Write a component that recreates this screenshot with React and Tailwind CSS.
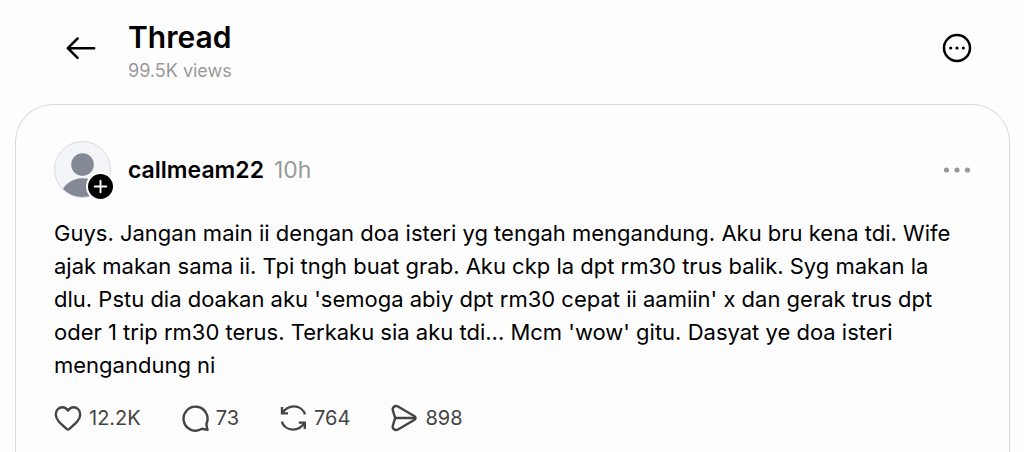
import React from 'react';

const stats = [
  { label: 'Like', count: '12.2K', Icon: HeartIcon },
  { label: 'Reply', count: '73', Icon: ReplyIcon },
  { label: 'Repost', count: '764', Icon: RepostIcon },
  { label: 'Share', count: '898', Icon: SendIcon },
];

const strokeProps = {
  viewBox: '0 0 28 28',
  fill: 'none',
  stroke: 'currentColor',
  strokeWidth: 2.4,
  strokeLinecap: 'round',
  strokeLinejoin: 'round',
  className: 'size-7 shrink-0',
  'aria-hidden': true,
};

function HeartIcon() {
  return (
    <svg {...strokeProps}>
      <path d="M14 6.500C12.700 4.500 10.800 3.200 8.500 3.200 4.700 3.200 1.800 6.300 1.800 10.400c0 5.200 4.300 9.100 11.100 14.700.7.6 1.500.6 2.200 0 6.800-5.600 11.100-9.500 11.100-14.700 0-4.100-2.900-7.200-6.700-7.200-2.300 0-4.200 1.300-5.500 3.300Z" />
    </svg>
  );
}

function ReplyIcon() {
  return (
    <svg {...strokeProps}>
      <path d="M25.300 20A12 12 0 1 0 21 24.800L26.500 25.900Z" />
    </svg>
  );
}

function RepostIcon() {
  return (
    <svg {...strokeProps} strokeLinejoin="miter" strokeLinecap="butt">
      <path d="M26 10.400C24.500 5.600 20 2.400 14.900 2.400 10 2.400 5.800 5 3 9.600" />
      <path d="M3 3V9.400H9" />
      <path d="M2.800 17.600C4.300 22.400 8.800 25.600 13.900 25.600 18.800 25.600 23 23 25.800 18.400" />
      <path d="M25.800 25V18.600H19.800" />
    </svg>
  );
}

function SendIcon() {
  return (
    <svg {...strokeProps}>
      <path d="M24.600 12.300 8 2.500C4.900 .9 1.900 3.300 2.900 6.700L4.700 12.400Q5.200 14 4.700 15.600L2.900 21.300C1.900 24.700 4.900 27.100 8 25.500L24.600 15.700C25.900 14.900 25.900 13.100 24.600 12.300Z" />
      <path d="M5 14H24.500" />
    </svg>
  );
}

function Header() {
  return (
    <header className="flex items-center pt-[19px] pb-[17px] pl-[66px] pr-[52px]">
      <button type="button" aria-label="Back" className="mr-8 -mt-2.5">
        <svg viewBox="0 0 30 24" fill="none" stroke="currentColor" strokeWidth="2.500" strokeLinecap="round" strokeLinejoin="round" className="h-6 w-[30px]">
          <path d="M28.200 12.200H1.800M11.600 2.500 1.800 12.200 11.600 21.900" />
        </svg>
      </button>
      <div className="flex-1">
        <h1 className="text-[30px] leading-9 font-semibold">Thread</h1>
        <p className="text-[18px] leading-8 text-[#999999]">99.5K views</p>
      </div>
      <button type="button" aria-label="More options" className="-mt-2.5">
        <svg viewBox="0 0 30 30" className="size-[30px]" aria-hidden="true">
          <circle cx="15" cy="15" r="13" fill="none" stroke="currentColor" strokeWidth="2.500" />
          <circle cx="8.700" cy="15" r="1.600" />
          <circle cx="15" cy="15" r="1.600" />
          <circle cx="21.300" cy="15" r="1.600" />
        </svg>
      </button>
    </header>
  );
}

function Avatar() {
  return (
    <button type="button" aria-label="Follow callmeam22" className="relative shrink-0">
      <span className="block size-[57px] overflow-hidden rounded-full border border-[#dcdddf] bg-[#f3f5f9]">
        <svg viewBox="0 0 56 56" className="size-full" aria-hidden="true">
          <circle cx="28" cy="23" r="11.500" fill="#838a95" />
          <ellipse cx="28" cy="56" rx="22" ry="19" fill="#838a95" />
        </svg>
      </span>
      <span className="absolute -right-1 -bottom-[3px] rounded-full border-2 border-[#fdfdfd] bg-black">
        <svg viewBox="0 0 26 26" stroke="#fff" strokeWidth="2" strokeLinecap="round" className="size-[25px]" aria-hidden="true">
          <path d="M13 7V19M7 13H19" />
        </svg>
      </span>
    </button>
  );
}

function App() {
  return (
    <div className="flex min-h-screen flex-col bg-[#fdfdfd] font-['Inter',sans-serif] text-black">
      <Header />

      <article className="ml-[15px] mr-[14px] flex-1 rounded-t-[38px] border border-b-0 border-[#d9d9d9] px-[38px] pt-9 pb-5">
        <div className="flex items-center">
          <Avatar />
          <a href="#profile" className="ml-[17px] text-[23px] leading-8 font-semibold">callmeam22</a>
          <time className="ml-[10px] flex-1 text-[23px] leading-8 text-[#999999]">10h</time>
          <button type="button" aria-label="Post menu" className="text-[#999999]">
            <svg viewBox="0 0 28 8" fill="currentColor" className="h-2 w-7" aria-hidden="true">
              <circle cx="3.500" cy="4" r="2.600" />
              <circle cx="14" cy="4" r="2.600" />
              <circle cx="24.500" cy="4" r="2.600" />
            </svg>
          </button>
        </div>

        <p className="mt-[19px] text-[22px] leading-[33px]">
          Guys. Jangan main ii dengan doa isteri yg tengah mengandung. Aku bru kena tdi. Wife ajak makan sama ii. Tpi tngh buat grab. Aku ckp la dpt rm30 trus balik. Syg makan la dlu. Pstu dia doakan aku 'semoga abiy dpt rm30 cepat ii aamiin' x dan gerak trus dpt oder 1 trip rm30 terus. Terkaku sia aku tdi... Mcm 'wow' gitu. Dasyat ye doa isteri mengandung ni
        </p>

        <div className="mt-[22px] flex flex-wrap gap-10 text-[20px] leading-7 text-[#444444]">
          {stats.map(({ label, count, Icon }) => (
            <button key={label} type="button" aria-label={`${label} ${count}`} className="flex items-center gap-[7px]">
              <Icon />
              <span>{count}</span>
            </button>
          ))}
        </div>
      </article>
    </div>
  );
}

export default App;
